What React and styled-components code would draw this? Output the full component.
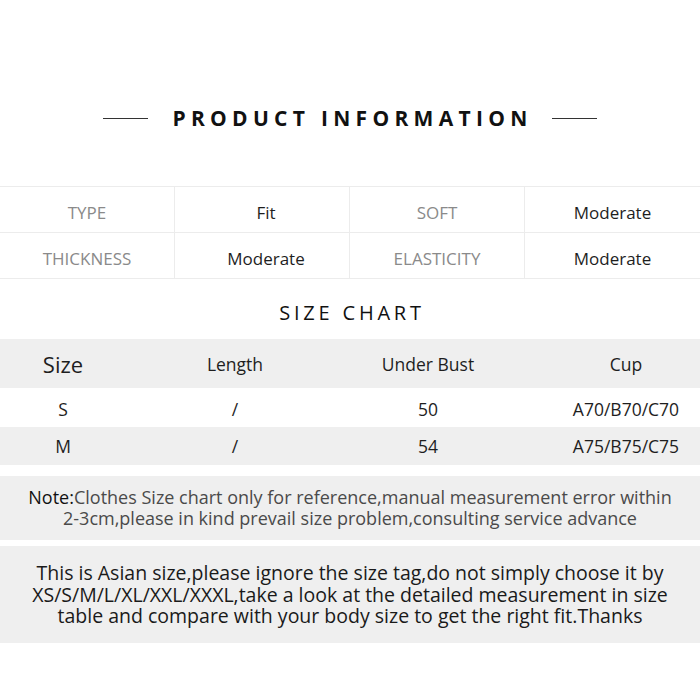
import React from "react";
import styled, { createGlobalStyle } from "styled-components";

const Global = createGlobalStyle`
  html, body { margin: 0; padding: 0; background: #fff; }
  body { font-family: "Open Sans", "Noto Sans", sans-serif; color: #222; }
`;

const Page = styled.div`
  width: 700px;
  height: 690px;
  overflow: hidden;
  background: #fff;
  display: flex;
  flex-direction: column;
`;

const TitleBar = styled.div`
  display: flex;
  align-items: center;
  justify-content: center;
  gap: 19px;
  height: 28px;
  margin-top: 104px;
  margin-bottom: 54px;
`;

const Rule = styled.span`
  width: 45px;
  height: 1px;
  background: #333;
`;

const Title = styled.h1`
  margin: 0;
  font-size: 21px;
  font-weight: 700;
  letter-spacing: 5.3px;
  line-height: 28px;
  color: #111;
  padding-left: 5px;
`;

const InfoGrid = styled.div`
  display: grid;
  grid-template-columns: repeat(4, 175px);
  grid-auto-rows: 46px;
  border-top: 1px solid #ececec;
`;

const InfoCell = styled.div`
  display: flex;
  align-items: center;
  justify-content: center;
  padding-top: 6px;
  box-sizing: border-box;
  border-bottom: 1px solid #ececec;
  border-right: ${(p) => (p.$last ? "none" : "1px solid #ececec")};
  font-size: 17px;
  color: ${(p) => (p.$label ? "#8a8a8a" : "#1e1e1e")};
  padding-left: ${(p) => (p.$label || p.$last ? "0" : "8px")};
`;

const SubTitle = styled.h2`
  margin: 0;
  height: 60px;
  box-sizing: border-box;
  padding-top: 6px;
  display: flex;
  align-items: center;
  justify-content: center;
  font-size: 20px;
  font-weight: 400;
  letter-spacing: 3.8px;
  color: #111;
  padding-left: 4px;
`;

const SizeRow = styled.div`
  display: grid;
  grid-template-columns: 126px 218px 168px 1fr;
  height: ${(p) => p.$h}px;
  align-items: center;
  background: ${(p) => (p.$gray ? "#efefef" : "#fff")};
  font-size: 17.5px;
  color: #1e1e1e;
`;

const SizeCell = styled.div`
  text-align: center;
  font-size: ${(p) => (p.$big ? "22px" : "inherit")};
  padding-left: ${(p) => (p.$shift ? "40px" : "0")};
  padding-top: ${(p) => (p.$low ? "3px" : "0")};
`;

const NoteBox = styled.div`
  background: #efefef;
  margin-top: ${(p) => p.$mt}px;
  height: ${(p) => p.$h}px;
  box-sizing: border-box;
  display: flex;
  align-items: center;
  justify-content: center;
  text-align: center;
  line-height: 21.5px;
`;

const NoteText = styled.p`
  margin: 0;
  white-space: nowrap;
  font-size: ${(p) => (p.$dark ? "19.5px" : "18px")};
  color: ${(p) => (p.$dark ? "#1a1a1a" : "#4a4a4a")};
`;

const Strong = styled.span`
  color: #111;
`;

const info = [
  ["TYPE", "Fit", "SOFT", "Moderate"],
  ["THICKNESS", "Moderate", "ELASTICITY", "Moderate"],
];

const sizes = [
  ["S", "/", "50", "A70/B70/C70"],
  ["M", "/", "54", "A75/B75/C75"],
];

export default function App() {
  return (
    <Page>
      <Global />
      <TitleBar>
        <Rule />
        <Title>PRODUCT INFORMATION</Title>
        <Rule />
      </TitleBar>
      <InfoGrid>
        {info.map((row) =>
          row.map((t, i) => (
            <InfoCell key={row[0] + i} $label={i % 2 === 0} $last={i === 3}>
              {t}
            </InfoCell>
          ))
        )}
      </InfoGrid>
      <SubTitle>SIZE CHART</SubTitle>
      <SizeRow $h={49} $gray>
        <SizeCell $big>Size</SizeCell>
        <SizeCell>Length</SizeCell>
        <SizeCell>Under Bust</SizeCell>
        <SizeCell $shift>Cup</SizeCell>
      </SizeRow>
      {sizes.map((r, idx) => (
        <SizeRow key={r[0]} $h={idx === 0 ? 39 : 38} $gray={idx === 1}>
          <SizeCell $low={idx === 0}>{r[0]}</SizeCell>
          <SizeCell $low={idx === 0}>{r[1]}</SizeCell>
          <SizeCell $low={idx === 0}>{r[2]}</SizeCell>
          <SizeCell $low={idx === 0} $shift>{r[3]}</SizeCell>
        </SizeRow>
      ))}
      <NoteBox $mt={11} $h={64}>
        <NoteText>
          <Strong>Note:</Strong>Clothes Size chart only for reference,manual measurement error within
          <br />
          2-3cm,please in kind prevail size problem,consulting service advance
        </NoteText>
      </NoteBox>
      <NoteBox $mt={6} $h={97}>
        <NoteText $dark>
          This is Asian size,please ignore the size tag,do not simply choose it by
          <br />
          XS/S/M/L/XL/XXL/XXXL,take a look at the detailed measurement in size
          <br />
          table and compare with your body size to get the right fit.Thanks
        </NoteText>
      </NoteBox>
    </Page>
  );
}
